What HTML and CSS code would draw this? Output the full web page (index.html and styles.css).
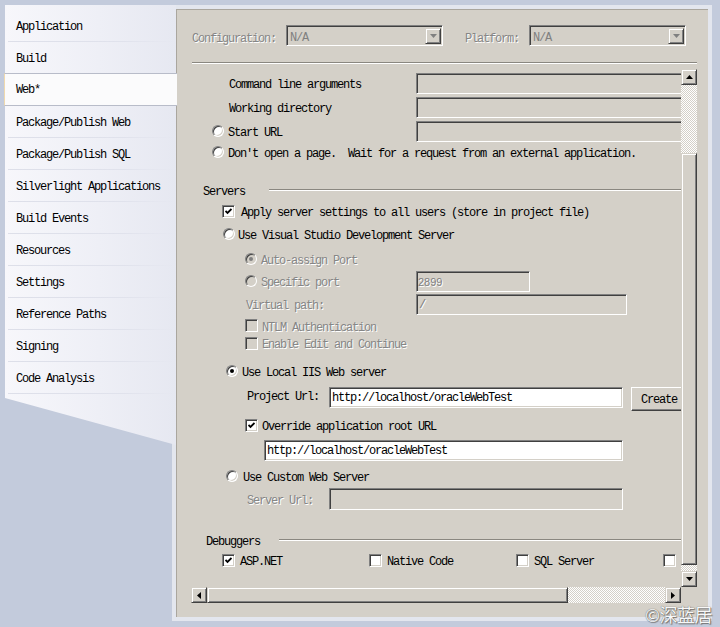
FILE: index.html
```html
<!DOCTYPE html>
<html lang="en">
<head>
<meta charset="utf-8">
<title>Web Properties</title>
<link rel="stylesheet" href="styles.css">
</head>
<body>
<div class="app">
  <nav class="nav">
    <div class="nav-item">Application</div>
    <div class="nav-item">Build</div>
    <div class="nav-item selected">Web*</div>
    <div class="nav-item">Package/Publish Web</div>
    <div class="nav-item">Package/Publish SQL</div>
    <div class="nav-item">Silverlight Applications</div>
    <div class="nav-item">Build Events</div>
    <div class="nav-item">Resources</div>
    <div class="nav-item">Settings</div>
    <div class="nav-item">Reference Paths</div>
    <div class="nav-item">Signing</div>
    <div class="nav-item">Code Analysis</div>
  </nav>
  <main class="panel">
    <div class="config-row">
      <span class="lbl dis">Configuration:</span>
      <div class="combo"><span class="combo-text">N/A</span><span class="combo-btn"><svg width="7" height="4" viewBox="0 0 7 4"><polygon points="0,0 7,0 3.5,4" fill="#808080"/></svg></span></div>
      <span class="lbl dis platform-label">Platform:</span>
      <div class="combo"><span class="combo-text">N/A</span><span class="combo-btn"><svg width="7" height="4" viewBox="0 0 7 4"><polygon points="0,0 7,0 3.5,4" fill="#808080"/></svg></span></div>
    </div>
    <div class="sep"></div>
    <div class="scroller">
      <div class="viewport">
        <div class="row r-cmd"><span class="lbl flabel">Command line arguments</span><span class="tbox dis long"></span></div>
        <div class="row r-wd"><span class="lbl flabel">Working directory</span><span class="tbox dis long"></span></div>
        <div class="row r-start"><span class="opt start-opt"><span class="radio"></span><span class="lbl">Start URL</span></span><span class="tbox dis long"></span></div>
        <div class="row r-dont"><span class="opt"><span class="radio"></span><span class="lbl pre">Don't open a page.  Wait for a request from an external application.</span></span></div>

        <div class="group r-servers"><span class="lbl">Servers</span><span class="gline"></span></div>
        <div class="row r-apply"><span class="check"><svg width="7" height="7" viewBox="0 0 7 7"><polyline points="0.5,3 2.5,5 6.5,1" fill="none" stroke="#000" stroke-width="1.8"/></svg></span><span class="lbl">Apply server settings to all users (store in project file)</span></div>
        <div class="row r-usevs"><span class="radio"></span><span class="lbl">Use Visual Studio Development Server</span></div>
        <div class="row r-auto"><span class="radio dis on"></span><span class="lbl dis">Auto-assign Port</span></div>
        <div class="row r-spec"><span class="opt spec-opt"><span class="radio dis"></span><span class="lbl dis">Specific port</span></span><span class="tbox dis port"><span class="port-num">2899</span></span></div>
        <div class="row r-vpath"><span class="lbl dis vpath-label">Virtual path:</span><span class="tbox dis vpath">/</span></div>
        <div class="row r-ntlm"><span class="check dis"></span><span class="lbl dis">NTLM Authentication</span></div>
        <div class="row r-enc"><span class="check dis"></span><span class="lbl dis">Enable Edit and Continue</span></div>
        <div class="row r-iis"><span class="radio on"></span><span class="lbl">Use Local IIS Web server</span></div>
        <div class="row r-proj"><span class="url-label">Project Url:</span><span class="tbox url">http://localhost/oracleWebTest</span><span class="btn">Create</span></div>
        <div class="row r-override"><span class="check"><svg width="7" height="7" viewBox="0 0 7 7"><polyline points="0.5,3 2.5,5 6.5,1" fill="none" stroke="#000" stroke-width="1.8"/></svg></span><span class="lbl">Override application root URL</span></div>
        <div class="row r-root"><span class="tbox root">http://localhost/oracleWebTest</span></div>
        <div class="row r-custom"><span class="radio"></span><span class="lbl">Use Custom Web Server</span></div>
        <div class="row r-server"><span class="lbl url-label dis">Server Url:</span><span class="tbox dis url tall"></span></div>

        <div class="group r-debug"><span class="lbl">Debuggers</span><span class="gline"></span></div>
        <div class="row r-dbg">
          <span class="dbg-item"><span class="check"><svg width="7" height="7" viewBox="0 0 7 7"><polyline points="0.5,3 2.5,5 6.5,1" fill="none" stroke="#000" stroke-width="1.8"/></svg></span><span class="lbl">ASP.NET</span></span>
          <span class="dbg-item"><span class="check"></span><span class="lbl">Native Code</span></span>
          <span class="dbg-item"><span class="check"></span><span class="lbl">SQL Server</span></span>
          <span class="dbg-item"><span class="check"></span></span>
        </div>
      </div>
      <div class="vscroll">
        <div class="sbtn"><svg width="7" height="4" viewBox="0 0 7 4"><polygon points="3.5,0 7,4 0,4" fill="#000"/></svg></div>
        <div class="vthumb"></div>
        <div class="sbtn end-btn"><svg width="7" height="4" viewBox="0 0 7 4"><polygon points="0,0 7,0 3.5,4" fill="#000"/></svg></div>
      </div>
      <div class="hscroll">
        <div class="sbtn"><svg width="4" height="7" viewBox="0 0 4 7"><polygon points="0,3.5 4,0 4,7" fill="#000"/></svg></div>
        <div class="hthumb"></div>
        <div class="sbtn end-btn"><svg width="4" height="7" viewBox="0 0 4 7"><polygon points="0,0 4,3.5 0,7" fill="#000"/></svg></div>
      </div>
      <div class="corner"></div>
    </div>
  </main>
</div>
<div class="watermark">©深蓝居</div>
</body>
</html>
```

FILE: styles.css
```css
* { box-sizing: border-box; }

html, body {
  margin: 0;
  padding: 0;
}

body {
  position: relative;
  width: 720px;
  height: 627px;
  overflow: hidden;
  background: #c3cbdc;
  font-family: "Liberation Mono", monospace;
  font-size: 12px;
  letter-spacing: -1.2px;
  line-height: 16px;
  color: #000;
}

.app {
  display: flex;
  align-items: flex-start;
  padding: 5px 0 0 5px;
  height: 627px;
}

/* ---------- left navigation ---------- */
.nav {
  position: relative;
  z-index: 2;
  flex-shrink: 0;
  width: 171px;
  height: 440px;
  margin-right: -4px;
  padding-top: 5px;
}

.nav::before {
  content: "";
  position: absolute;
  inset: 0;
  z-index: -1;
  background: linear-gradient(to right, #f7f7fb 0%, #eeeff6 55%, #e6e8f1 100%);
  clip-path: polygon(0 0, 100% 0, 100% 100%, 0 393px);
}

.nav-item {
  height: 32px;
  line-height: 31px;
  padding: 2px 0 0 11px;
  white-space: nowrap;
  background: linear-gradient(to right, transparent 3px, #dddfe9 3px, #e0e2ec 70%, rgba(230,232,241,0) 100%) left bottom / 100% 1px no-repeat;
}

.nav-item.selected {
  height: 33px;
  margin: -1px -1px 0 -1px;
  padding: 2px 0 0 11px;
  line-height: 29px;
  background: #fbfbfc;
  border-top: 1px solid #b8bcc9;
  border-bottom: 1px solid #b8bcc9;
  border-left: 1px solid #efd9ae;
}

/* ---------- main panel ---------- */
.panel {
  flex-shrink: 0;
  width: 540px;
  height: 616px;
  border: 4px solid #e3e6ee;
  background: #d4d0c8;
  box-shadow: inset 1px 1px 0 #aaa69e;
  padding: 16px 0 0 15px;
}

/* text labels: the reference font sits a little lower in its box */
.lbl { padding-top: 4px; }

.config-row {
  display: flex;
  align-items: center;
  height: 21px;
  margin-left: 1px;
  white-space: nowrap;
}

.config-row .lbl { padding-top: 6px; }

.dis {
  color: #868686;
  text-shadow: 1px 1px 0 #fff;
}

.platform-label { margin-left: 22px; }

.combo {
  display: flex;
  align-items: center;
  width: 157px;
  height: 21px;
  margin-left: 10px;
  padding: 0 1px 0 3px;
  border: 1px solid;
  border-color: #808080 #fff #fff #808080;
  box-shadow: inset 1px 1px 0 #404040, inset -1px -1px 0 #d4d0c8;
}

.combo-text {
  flex: 1;
  padding-top: 4px;
  color: #808080;
}

.combo-btn {
  display: flex;
  align-items: center;
  justify-content: center;
  width: 16px;
  height: 16px;
  margin-top: 1px;
  background: #d4d0c8;
  border: 1px solid;
  border-color: #d4d0c8 #404040 #404040 #d4d0c8;
  box-shadow: inset 1px 1px 0 #fff, inset -1px -1px 0 #808080;
}

.sep {
  width: 505px;
  height: 2px;
  margin: 16px 0 0 1px;
  border-top: 1px solid #8a8780;
  border-bottom: 1px solid #fff;
}

/* ---------- scroll area ---------- */
.scroller {
  display: grid;
  grid-template-columns: 490px 16px;
  grid-template-rows: 518px 16px;
  margin-top: 5px;
}

.viewport {
  overflow: hidden;
}

.row {
  display: flex;
  align-items: center;
  height: 18px;
  white-space: nowrap;
}

.row > *, .opt > *, .dbg-item > * { flex-shrink: 0; }

.opt {
  display: flex;
  align-items: center;
  gap: 4px;
  flex-shrink: 0;
}

.pre { white-space: pre; }

.group {
  display: flex;
  align-items: center;
  height: 16px;
  white-space: nowrap;
}

.gline {
  flex: 1;
  height: 2px;
  border-top: 1px solid #8a8780;
  border-bottom: 1px solid #fff;
}

/* controls */
.radio {
  display: flex;
  align-items: center;
  justify-content: center;
  width: 12px;
  height: 12px;
  border-radius: 50%;
  background: #fff;
  border: 1px solid;
  border-color: #808080 #fff #fff #808080;
  box-shadow: inset 1px 1px 0 #404040, inset -1px -1px 0 #d4d0c8;
}

.radio.on::after {
  content: "";
  width: 4px;
  height: 4px;
  border-radius: 50%;
  background: #000;
}

.radio.dis { background: #d4d0c8; }
.radio.dis.on::after { background: #808080; }

.check {
  display: flex;
  align-items: center;
  justify-content: center;
  width: 13px;
  height: 13px;
  background: #fff;
  border: 1px solid;
  border-color: #808080 #fff #fff #808080;
  box-shadow: inset 1px 1px 0 #404040, inset -1px -1px 0 #d4d0c8;
}

.check.dis { background: #d4d0c8; }

.tbox {
  height: 21px;
  line-height: 19px;
  padding: 1px 0 0 2px;
  overflow: hidden;
  background: #fff;
  border: 1px solid;
  border-color: #808080 #fff #fff #808080;
  box-shadow: inset 1px 1px 0 #404040, inset -1px -1px 0 #d4d0c8;
}

.tbox.dis {
  background: #d4d0c8;
  color: #808080;
}

.btn {
  width: 56px;
  height: 24px;
  margin-left: 8px;
  padding-top: 1px;
  line-height: 22px;
  text-align: center;
  background: #d4d0c8;
  border: 1px solid;
  border-color: #fff #404040 #404040 #fff;
  box-shadow: inset -1px -1px 0 #808080;
}

/* rows */
.r-cmd { margin-top: 3px; height: 22px; padding-left: 38px; }
.r-wd { margin-top: 2px; height: 22px; padding-left: 38px; }
.flabel { width: 187px; }
.tbox.long { width: 300px; }

.r-start { margin-top: 2px; height: 22px; padding-left: 21px; }
.start-opt { width: 204px; }
.r-dont { margin-top: 1px; padding-left: 21px; }

.r-servers { margin-top: 21px; padding-left: 12px; }
.r-servers .gline { margin-left: 24px; }

.r-apply { margin-top: 4px; padding-left: 31px; gap: 6px; }
.r-usevs { margin-top: 5px; padding-left: 32px; gap: 3px; }
.r-auto { margin-top: 7px; padding-left: 54px; gap: 4px; }

.r-spec { margin-top: 2px; height: 22px; padding-left: 54px; }
.spec-opt { width: 171px; }
.tbox.port { width: 114px; padding-left: 1px; }
.port-num {
  font-family: "Liberation Sans", Arial, sans-serif;
  font-size: 11px;
  letter-spacing: 0;
}

.r-vpath { margin-top: 1px; height: 22px; padding-left: 55px; }
.vpath-label { width: 170px; }
.tbox.vpath { width: 211px; }

.r-ntlm { margin-top: 2px; height: 17px; padding-left: 54px; gap: 4px; }
.r-enc { padding-left: 54px; gap: 4px; }

.r-iis { margin-top: 10px; padding-left: 35px; gap: 4px; }

.r-proj { margin-top: 7px; height: 24px; align-items: flex-start; padding-left: 56px; }
.url-label { width: 82px; }
.r-proj .url-label { padding-top: 2px; }
.tbox.url { width: 294px; }

.r-override { margin-top: 5px; padding-left: 54px; gap: 4px; }

.r-root { margin-top: 6px; height: 21px; padding-left: 73px; }
.tbox.root { width: 359px; }

.r-custom { margin-top: 6px; padding-left: 35px; gap: 5px; }

.r-server { margin-top: 3px; height: 22px; padding-left: 56px; }
.tbox.tall { height: 22px; }

.r-debug { margin-top: 22px; padding-left: 15px; }
.r-debug .gline { margin-left: 19px; }

.r-dbg { margin-top: 3px; padding-left: 31px; }
.dbg-item {
  display: flex;
  align-items: center;
  gap: 5px;
  width: 147px;
  flex-shrink: 0;
}

/* scrollbars */
.vscroll, .hscroll {
  display: flex;
  background: repeating-conic-gradient(#fff 0 25%, #d4d0c8 0 50%) 0 0 / 2px 2px;
}

.vscroll { flex-direction: column; }

.sbtn, .vthumb, .hthumb {
  flex-shrink: 0;
  background: #d4d0c8;
  border: 1px solid;
  border-color: #d4d0c8 #404040 #404040 #d4d0c8;
  box-shadow: inset 1px 1px 0 #fff, inset -1px -1px 0 #808080;
}

.sbtn {
  display: flex;
  align-items: center;
  justify-content: center;
  width: 16px;
  height: 16px;
}

.end-btn { margin: auto 0 0 0; }
.hscroll .end-btn { margin: 0 0 0 auto; }

.vthumb {
  width: 16px;
  height: 412px;
  margin-top: 68px;
}

.hthumb {
  width: 361px;
  height: 16px;
}

.corner { background: #d4d0c8; }

/* watermark overlay */
.watermark {
  position: absolute;
  left: 645px;
  top: 603px;
  font-family: "Noto Sans CJK SC", sans-serif;
  font-size: 18px;
  line-height: 22px;
  letter-spacing: -0.5px;
  color: #f8f8f8;
  text-shadow: 0 0 1px #444, 1px 1px 1px #777;
}
```
